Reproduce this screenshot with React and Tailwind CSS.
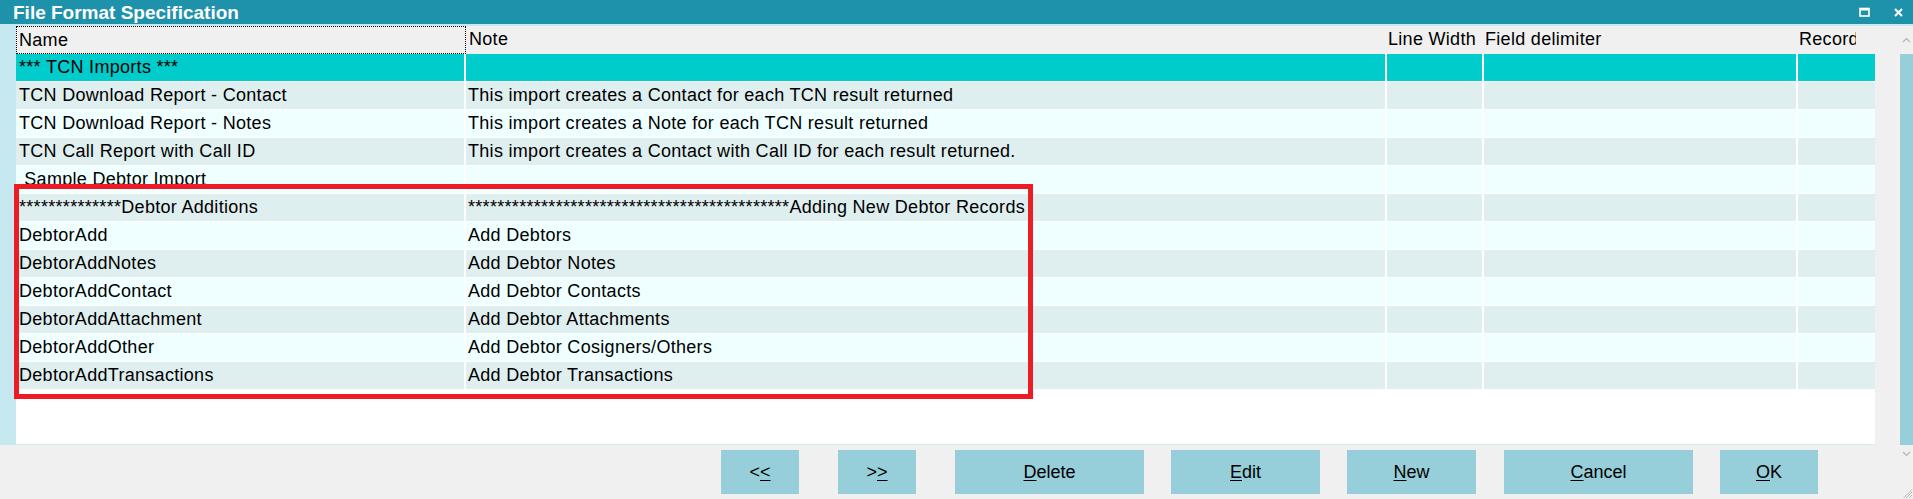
import React from "react";

const FONT = "font-['Liberation_Sans',Arial,sans-serif]";

const ROWS = [
  ["*** TCN Imports ***", ""],
  ["TCN Download Report - Contact", "This import creates a Contact for each TCN result returned"],
  ["TCN Download Report - Notes", "This import creates a Note for each TCN result returned"],
  ["TCN Call Report with Call ID", "This import creates a Contact with Call ID for each result returned."],
  [" Sample Debtor Import", ""],
  ["**************Debtor Additions", "********************************************Adding New Debtor Records"],
  ["DebtorAdd", "Add Debtors"],
  ["DebtorAddNotes", "Add Debtor Notes"],
  ["DebtorAddContact", "Add Debtor Contacts"],
  ["DebtorAddAttachment", "Add Debtor Attachments"],
  ["DebtorAddOther", "Add Debtor Cosigners/Others"],
  ["DebtorAddTransactions", "Add Debtor Transactions"],
];

// u = index of the mnemonic letter, ml = space before the button
const BUTTONS = [
  { label: "<<", u: 1, w: "w-[78px]", ml: "ml-0" },
  { label: ">>", u: 1, w: "w-[78px]", ml: "ml-[39px]" },
  { label: "Delete", u: 0, w: "w-[189px]", ml: "ml-[39px]" },
  { label: "Edit", u: 0, w: "w-[149px]", ml: "ml-[27px]" },
  { label: "New", u: 0, w: "w-[129px]", ml: "ml-[27px]" },
  { label: "Cancel", u: 0, w: "w-[189px]", ml: "ml-[28px]" },
  { label: "OK", u: 0, w: "w-[98px]", ml: "ml-[27px]" },
];

function Mnemonic({ label, u }) {
  return (
    <>
      {label.slice(0, u)}
      <span className="underline underline-offset-2">{label[u]}</span>
      {label.slice(u + 1)}
    </>
  );
}

function rowBg(i) {
  if (i === 0) return "bg-[#00cccc]";
  return i % 2 === 1 ? "bg-[#dfeeee]" : "bg-[#efffff]";
}

export default function App() {
  return (
    <div className={`relative flex h-[499px] w-[1913px] flex-col overflow-hidden bg-[#f0f0f0] text-black ${FONT}`}>
      {/* title bar */}
      <div className="flex h-[24px] shrink-0 items-center justify-between bg-[#1f92ab] pl-[13px] pr-[10px]">
        <span className="text-[19px] font-bold leading-none text-white">File Format Specification</span>
        <div className="flex items-center gap-[24px]">
          <svg width="11" height="10" viewBox="0 0 11 10">
            <rect x="1" y="1.5" width="9" height="7.5" fill="none" stroke="white" strokeWidth="1.6" />
            <rect x="1" y="1" width="9" height="2.5" fill="white" />
          </svg>
          <svg width="9" height="9" viewBox="0 0 9 9">
            <path d="M1 1L8 8M8 1L1 8" stroke="white" strokeWidth="2" />
          </svg>
        </div>
      </div>
      <div className="h-[2px] shrink-0 bg-[#c6e9f1]" />

      {/* body */}
      <div className="flex h-[419px] shrink-0">
        <div className="w-[16px] shrink-0 bg-[#c6e9f1]" />

        <div className="flex w-[1859px] shrink-0 flex-col bg-white text-[18px] tracking-[0.3px]">
          {/* header */}
          <div className="flex h-[28px] shrink-0 bg-[#f0f0f0] leading-[26px]">
            <div className="w-[450px] shrink-0 border border-dotted border-black pl-[2px]">Name</div>
            <div className="w-[921px] shrink-0 pl-[3px]">Note</div>
            <div className="w-[97px] shrink-0 overflow-hidden whitespace-nowrap pl-[1px]">Line Width</div>
            <div className="w-[314px] shrink-0 pl-[1px]">Field delimiter</div>
            <div className="w-[58px] shrink-0 overflow-hidden whitespace-nowrap pl-[1px]">Record</div>
          </div>

          {/* rows */}
          {ROWS.map(([name, note], i) => (
            <div key={i} className={`flex h-[28px] shrink-0 border-b border-white leading-[27px] ${rowBg(i)}`}>
              <div className="w-[450px] shrink-0 whitespace-pre border-r-2 border-white pl-[3px]">{name}</div>
              <div className="w-[921px] shrink-0 overflow-hidden whitespace-pre border-r-2 border-white pl-[2px]">{note}</div>
              <div className="w-[97px] shrink-0 border-r-2 border-white" />
              <div className="w-[314px] shrink-0 border-r-2 border-white" />
              <div className="w-[77px] shrink-0" />
            </div>
          ))}
          <div className="flex-1 border-b border-[#d6eef3] bg-white" />
        </div>

        {/* scrollbar */}
        <div className="flex flex-1 flex-col items-end bg-[#f0f0f0]">
          <div className="flex h-[28px] w-[13px] items-center justify-center">
            <svg width="9" height="6" viewBox="0 0 9 6">
              <path d="M1 5L4.5 1.5L8 5" fill="none" stroke="#b4b4b4" strokeWidth="1.2" />
            </svg>
          </div>
          <div className="w-[13px] flex-1 bg-[#96ced9]" />
        </div>
      </div>

      {/* button bar */}
      <div className="flex flex-1 items-start">
        <div className="flex flex-1 justify-end pt-[5px]">
          {BUTTONS.map((b) => (
            <button
              key={b.label}
              className={`flex h-[44px] items-center justify-center bg-[#96ced9] text-[18px] ${b.w} ${b.ml}`}
            >
              <Mnemonic label={b.label} u={b.u} />
            </button>
          ))}
        </div>
        <div className="flex h-full w-[95px] flex-col items-end justify-between">
          <div className="flex h-[18px] w-[13px] items-center justify-center">
            <svg width="9" height="6" viewBox="0 0 9 6">
              <path d="M1 1L4.5 4.5L8 1" fill="none" stroke="#b4b4b4" strokeWidth="1.2" />
            </svg>
          </div>
          <svg width="10" height="10" viewBox="0 0 10 10">
            <path d="M9 3L3 9M9 6L6 9M9 0.5L0.5 9" stroke="#a8a8a8" strokeWidth="0.8" />
          </svg>
        </div>
      </div>

      {/* red highlight overlay */}
      <div className="pointer-events-none absolute left-[14px] top-[184px] h-[215px] w-[1019px] border-[5px] border-[#ed1c24]" />
    </div>
  );
}
